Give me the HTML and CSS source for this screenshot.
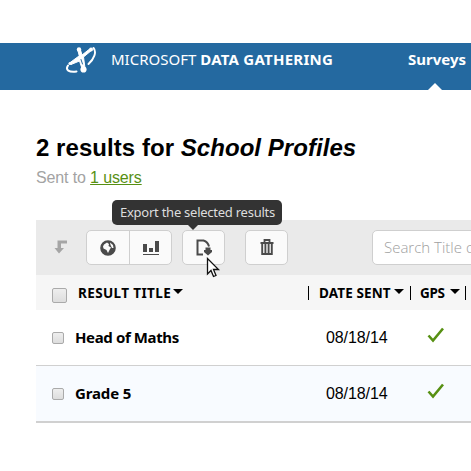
FILE: index.html
```
<!DOCTYPE html>
<html lang="en">
<head>
<meta charset="utf-8">
<title>Data Gathering</title>
<link rel="stylesheet" href="styles.css">
</head>
<body>
<header class="topbar">
  <svg class="logo" width="32" height="30" viewBox="0 0 32 30" fill="none" stroke="#fff" stroke-linecap="round">
    <path d="M13 4.500 15.500 5 17 10 24 4.500 27 5 18.500 12 20 23 17.500 25 14.500 16 6 19.500 4.500 18 14 11Z" fill="#fff" stroke-width="1"/>
    <path d="M28.500 3C32 7 29 14 23.500 19" stroke-width="1.900"/>
    <path d="M3 20.500C0 25 4 27.500 11.500 26.500" stroke-width="2"/>
    <g fill="#fff" stroke="none"><circle cx="14" cy="4.500" r="2.200"/><circle cx="26" cy="4.500" r="2"/><circle cx="18.500" cy="24.500" r="3.100"/><circle cx="5" cy="18.500" r="1.600"/></g>
    <path d="M16 14.500 17.500 19" stroke="#2469a0" stroke-width="1"/>
  </svg>
  <div class="brand"><span class="brand-light">MICROSOFT</span> <b class="brand-bold">DATA GATHERING</b></div>
  <nav class="nav"><a class="nav-item">Surveys</a></nav>
</header>
<main class="content">
  <h1 class="title">2 results for <em>School Profiles</em></h1>
  <p class="sent">Sent to <a class="users">1 users</a></p>
  <div class="toolbar">
    <svg class="back" width="14" height="14" viewBox="0 0 14 14" fill="#a5a5a5"><path d="M3.500 0.500H13V3.500H7V8H10L5 13.500 0.500 8H3.500Z"/></svg>
    <div class="group">
      <button class="btn" aria-label="Map"><svg width="16" height="16" viewBox="0 0 16 16"><circle cx="8" cy="8" r="7" fill="#4a4a4a" stroke="#4a4a4a" stroke-width="1.600"/><path d="M4 4.500 7 2.500 9 4 8.500 6 11 7.500 9.500 10 8 13 6.500 10 3.500 8.500 3 6.500ZM10 2.500 13 5 13.500 8 12 8 10.500 5Z" fill="#fafafa"/></svg></button>
      <button class="btn btn-divided" aria-label="Chart"><svg width="16" height="16" viewBox="0 0 16 16" fill="#4a4a4a"><path d="M0 4H4V12H0ZM6 8H10V12H6ZM12 1H16V12H12ZM0 14H16V15H0Z"/></svg></button>
    </div>
    <div class="export">
      <button class="btn btn-single" aria-label="Export"><svg width="16" height="18" viewBox="0 0 16 18" fill="none"><path d="M7 15.500H1.500V1.500H7.500Q12 3 13 7.500" stroke="#4a4a4a" stroke-width="2"/><path d="M9.500 8.500H14.500V11H16V13L12 16.500 8 13V11H9.500Z" fill="#4a4a4a"/></svg></button>
      <div class="tooltip">Export the selected results</div>
      <svg class="cursor" width="15" height="21" viewBox="0 0 15 21"><path d="M1.500 1.500V17L5 13.500 7.500 19.500 10 18.500 7.500 12.500H12.500Z" fill="#fff" stroke="#111" stroke-width="1.300"/></svg>
    </div>
    <button class="btn btn-single btn-trash" aria-label="Delete"><svg width="14" height="17" viewBox="0 0 14 17" fill="none" stroke="#4a4a4a"><path d="M0.500 4H13.500M4.500 3.500V1H9.500V3.500" stroke-width="1.800"/><path d="M2.200 5V15H11.800V5M5.400 5V14.500M8.600 5V14.500" stroke-width="1.900"/></svg></button>
    <div class="search"><span class="search-text">Search Title or</span></div>
  </div>
  <div class="thead">
    <span class="box box-large"></span>
    <span class="th th-title">RESULT TITLE</span><i class="caret caret-title"></i>
    <span class="th th-date">DATE SENT</span><i class="caret"></i>
    <span class="th th-gps">GPS</span><i class="caret caret-gps"></i>
    <span class="th-end"></span>
  </div>
  <div class="row">
    <span class="box"></span><b class="name">Head of Maths</b><span class="date">08/18/14</span>
    <svg class="check" width="18" height="16" viewBox="0 0 18 16" fill="none" stroke="#579013" stroke-width="2.600"><path d="M1.500 8.500 6 13.500 16 1.500"/></svg>
  </div>
  <div class="row row-alt">
    <span class="box"></span><b class="name name-grade">Grade 5</b><span class="date">08/18/14</span>
    <svg class="check" width="18" height="16" viewBox="0 0 18 16" fill="none" stroke="#579013" stroke-width="2.600"><path d="M1.500 8.500 6 13.500 16 1.500"/></svg>
  </div>
</main>
</body>
</html>
```
FILE: styles.css
```
* { box-sizing: border-box; }
body { margin: 0; padding-top: 43px; width: 471px; height: 471px; overflow: hidden; background: #fff; color: #000; font-family: "Noto Sans", sans-serif; }
.topbar { display: flex; height: 47px; background: #2469a0; color: #fff; overflow: hidden; }
.logo { flex: none; margin: 2px 0 0 65px; }
.brand { margin-left: 14px; width: 297px; line-height: 20px; padding-top: 6px; font-size: 15px; white-space: pre; }
.brand-bold { letter-spacing: 0.25px; }
.nav { flex: none; display: flex; }
.nav-item { display: flex; flex-direction: column; align-items: center; justify-content: space-between; width: 58px; padding-top: 6px; font-size: 15px; line-height: 20px; font-weight: 700; }
.nav-item::after { content: ""; margin-right: 4px; border: 7px solid transparent; border-top: 0; border-bottom-color: #fff; }
.content { padding-left: 36px; overflow: hidden; }
.title { margin: 44px 0 0; font: bold 24px/28px "Liberation Sans", sans-serif; letter-spacing: 0.05px; white-space: nowrap; }
.sent { margin: 7px 0 0; font: 16px/18px "Liberation Sans", sans-serif; letter-spacing: -0.13px; color: #a3a3a3; }
.users { color: #579013; text-decoration: underline; }
.toolbar { display: flex; align-items: flex-start; height: 55px; margin-top: 33px; padding: 10px 0 0 18px; background: #eaeaea; }
.back { flex: none; margin: 10px 18px 0 0; }
.group { display: flex; flex: none; width: 86px; border: 1px solid #cfcfcf; border-radius: 5px; background: #fafafa; }
.btn { display: flex; align-items: center; justify-content: center; flex: none; width: 42px; height: 33px; padding: 0; border: 0; background: transparent; }
.btn-divided { border-left: 1px solid #cfcfcf; }
.export { position: relative; margin-left: 10px; }
.btn-single { width: 43px; height: 35px; border: 1px solid #cfcfcf; border-radius: 5px; background: #fafafa; }
.btn-trash { margin-left: 20px; }
.tooltip { position: absolute; left: -70px; top: -30px; width: 170px; height: 25px; padding-left: 8px; border-radius: 5px; background: #333; color: #ddd; font-size: 13px; letter-spacing: -0.25px; line-height: 24px; white-space: nowrap; }
.tooltip::after { content: ""; position: absolute; left: 76px; top: 25px; border: 5px solid transparent; border-bottom: 0; border-top-color: #333; }
.cursor { position: absolute; left: 24px; top: 27px; }
.search { flex: none; width: 150px; height: 35px; margin-left: 84px; padding-left: 11px; border: 1px solid #cfcfcf; border-radius: 5px; background: #fff; color: #a0a0a0; font-family: "Open Sans", sans-serif; font-weight: 300; font-size: 15px; line-height: 33px; white-space: nowrap; }
.thead { display: flex; align-items: center; height: 35px; padding-left: 16px; background: #f6f6f6; font-size: 13.5px; font-weight: 700; line-height: 18px; }
.box { flex: none; width: 12px; height: 12px; border: 1px solid #aaa; border-radius: 2px; background: linear-gradient(#eee, #ddd); }
.box-large { width: 15px; height: 15px; margin-top: 6px; }
.th { flex: none; white-space: nowrap; }
.th-title { width: 95px; margin-left: 11px; letter-spacing: 0.38px; }
.caret { flex: none; margin: -3px 0 0; border: 5px solid transparent; border-bottom: 0; border-top-color: #000; }
.th-date { width: 86px; margin-left: 125px; padding-left: 11px; letter-spacing: 0.12px; }
.th-gps { width: 36px; margin-left: 6px; padding-left: 10px; letter-spacing: -0.3px; }
.th-date, .th-gps, .th-end { position: relative; }
.th-date::before, .th-gps::before, .th-end::before { content: ""; position: absolute; left: 0; top: 2px; width: 1px; height: 14px; background: #000; }
.caret-gps { margin-left: 4px; }
.th-end { height: 18px; margin-left: 5px; }
.row { display: flex; align-items: center; height: 56px; padding-left: 16px; border-bottom: 1px solid #d0d0d0; }
.row-alt { height: 57px; background: #f8fbff; border-bottom-width: 2px; }
.name { flex: none; width: 251px; margin: -2px 0 0 11px; font-size: 15px; letter-spacing: -0.38px; white-space: nowrap; }
.name-grade { letter-spacing: -0.15px; }
.date { flex: none; width: 101px; font: 16px/18px "Liberation Sans", sans-serif; letter-spacing: -0.1px; }
.check { flex: none; margin-top: -5px; }
```
